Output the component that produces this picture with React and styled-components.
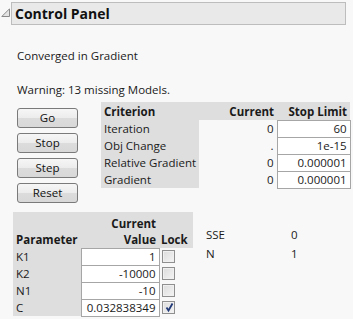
import styled, { createGlobalStyle } from "styled-components";

const Global = createGlobalStyle`
  html, body {
    margin: 0;
    padding: 0;
    background: #f8f8f8;
  }
  body {
    font-family: "Open Sans", "Noto Sans", sans-serif;
    font-size: 11.5px;
    color: #1a1a1a;
  }
`;

const Page = styled.div`
  width: 353px;
  height: 319px;
  overflow: hidden;
  padding-top: 2px;
  box-sizing: border-box;
`;

const TitleRow = styled.div`
  display: flex;
  align-items: flex-start;
`;

const Toggle = styled.svg`
  width: 9px;
  height: 9px;
  margin: 6px 0 0 1px;
  flex: none;
`;

const TitleBar = styled.div`
  width: 335px;
  height: 23px;
  margin-left: 1px;
  box-sizing: border-box;
  border: 1px solid #bdbdbd;
  background: #e9e9e9;
  font-size: 14px;
  font-weight: 700;
  line-height: 21px;
  padding-left: 3px;
  color: #111;
`;

const Body = styled.div`
  padding-left: 17px;
`;

const Message = styled.div`
  line-height: 16px;
  margin-top: ${(p) => p.top}px;
  white-space: nowrap;
`;

const Middle = styled.div`
  display: flex;
  align-items: flex-start;
  margin-top: 4px;
`;

const Buttons = styled.div`
  display: flex;
  flex-direction: column;
  gap: 5px;
  margin-top: 6px;
  width: 84px;
`;

const Button = styled.button`
  width: 61px;
  height: 20px;
  padding: 0;
  border: 1px solid #7a7a7a;
  border-radius: 3px;
  background: linear-gradient(#f6f6f6 0%, #ececec 50%, #dcdcdc 51%, #d8d8d8 100%);
  font-family: inherit;
  font-size: 11.5px;
  color: #111;
  line-height: 18px;
`;

const Table = styled.table`
  border-collapse: collapse;
  border-spacing: 0;
  font-size: 11.5px;
  line-height: 16px;
`;

const Th = styled.th`
  background: #dedede;
  font-weight: 700;
  text-align: ${(p) => p.align || "right"};
  padding: 0 ${(p) => p.pad ?? 3}px;
  width: ${(p) => p.w}px;
  height: ${(p) => p.h}px;
  vertical-align: bottom;
  box-sizing: border-box;
  white-space: nowrap;
`;

const Label = styled.td`
  background: #dedede;
  padding: 0 3px;
  height: 17px;
  text-align: left;
  white-space: nowrap;
  box-sizing: border-box;
`;

const Num = styled.td`
  text-align: right;
  padding: 0 3px;
  height: 17px;
  white-space: nowrap;
`;

const Box = styled.td`
  background: #fff;
  border: 1px solid #a6a6a6;
  text-align: right;
  padding: 0 3px;
  height: 17px;
  box-sizing: border-box;
  white-space: nowrap;
`;

const LockCell = styled.td`
  padding: 0 0 0 2px;
  height: 17px;
  vertical-align: middle;
`;

const Check = styled.span`
  display: block;
  width: 13px;
  height: 13px;
  box-sizing: border-box;
  border: 1px solid #8f8f8f;
  background: linear-gradient(135deg, #dcdcdc, #f4f4f4);
  box-shadow: inset 0 0 0 1px #f0f0f0;
  position: relative;
`;

const Tick = styled.svg`
  position: absolute;
  left: 1px;
  top: 0px;
  width: 11px;
  height: 11px;
`;

const Bottom = styled.div`
  display: flex;
  align-items: flex-start;
  margin-top: 9px;
  margin-left: -4px;
`;

const Stats = styled.div`
  display: grid;
  grid-template-columns: 85px auto;
  row-gap: 3px;
  margin-left: 13px;
  margin-top: 15px;
  line-height: 16px;
`;

const criteria = [
  ["Iteration", "0", "60"],
  ["Obj Change", ".", "1e-15"],
  ["Relative Gradient", "0", "0.000001"],
  ["Gradient", "0", "0.000001"],
];

const params = [
  ["K1", "1", false],
  ["K2", "-10000", false],
  ["N1", "-10", false],
  ["C", "0.032838349", true],
];

export default function App() {
  return (
    <Page>
      <Global />
      <TitleRow>
        <Toggle viewBox="0 0 9 9">
          <path d="M8.5 0.8 L8.5 8.5 L0.8 8.5 Z" fill="#e4e4e4" stroke="#8a8a8a" strokeWidth="1" />
        </Toggle>
        <TitleBar>Control Panel</TitleBar>
      </TitleRow>
      <Body>
        <Message top={23}>Converged in Gradient</Message>
        <Message top={18}>Warning: 13 missing Models.</Message>
        <Middle>
          <Buttons>
            <Button>Go</Button>
            <Button>Stop</Button>
            <Button>Step</Button>
            <Button>Reset</Button>
          </Buttons>
          <Table>
            <thead>
              <tr>
                <Th align="left" w={95} h={18}>Criterion</Th>
                <Th w={78} h={18}>Current</Th>
                <Th w={73} h={18}>Stop Limit</Th>
              </tr>
            </thead>
            <tbody>
              {criteria.map(([name, cur, lim]) => (
                <tr key={name}>
                  <Label>{name}</Label>
                  <Num>{cur}</Num>
                  <Box>{lim}</Box>
                </tr>
              ))}
            </tbody>
          </Table>
        </Middle>
        <Bottom>
          <Table>
            <thead>
              <tr>
                <Th align="left" w={68} h={36}>Parameter</Th>
                <Th w={78} h={36}>Current<br />Value</Th>
                <Th align="left" pad={2} w={34} h={36}>Lock</Th>
              </tr>
            </thead>
            <tbody>
              {params.map(([name, val, locked]) => (
                <tr key={name}>
                  <Label>{name}</Label>
                  <Box>{val}</Box>
                  <LockCell>
                    <Check>
                      {locked && (
                        <Tick viewBox="0 0 11 11">
                          <path d="M2.5 5.5 L4.5 8.5 L8.5 1.5" fill="none" stroke="#233a78" strokeWidth="1.8" />
                        </Tick>
                      )}
                    </Check>
                  </LockCell>
                </tr>
              ))}
            </tbody>
          </Table>
          <Stats>
            <span>SSE</span>
            <span>0</span>
            <span>N</span>
            <span>1</span>
          </Stats>
        </Bottom>
      </Body>
    </Page>
  );
}
